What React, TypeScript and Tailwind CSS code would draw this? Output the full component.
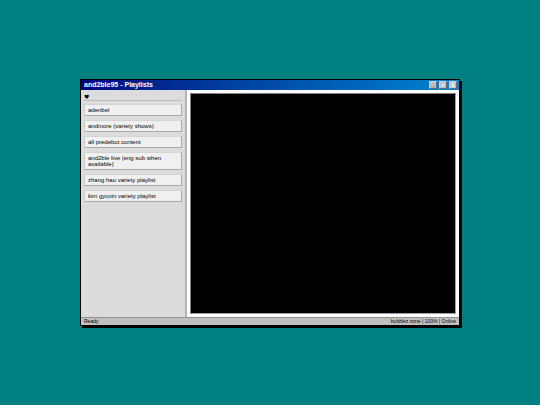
import { useState } from "react";

const PLAYLISTS = [
  { id: 1, title: "adenbel" },
  { id: 2, title: "andmore (variety shows)" },
  { id: 3, title: "all predebut content" },
  { id: 4, title: "and2ble live (eng sub when available)" },
  { id: 5, title: "zhang hao variety playlist" },
  { id: 6, title: "kim gyuvin variety playlist" },
];

const WINDOW_BUTTONS = [
  { label: "Minimize", glyph: "M2 6h4", color: "#999999" },
  { label: "Maximize", glyph: "M3 3h2v2h-2z", color: "#e4e4e4" },
  { label: "Close", glyph: "M2.5 1.5l3 5M5.5 1.5l-3 5", color: "#ffffff" },
];

function TitleBar() {
  return (
    <header className="flex h-[10px] shrink-0 items-center justify-between bg-linear-to-r from-[#000080] to-[#1084d0] pr-[2px] pl-[3px]">
      <h1 className="text-[7px] leading-[10px] font-bold text-white">and2ble95 - Playlists</h1>
      <div className="flex gap-[2px]">
        {WINDOW_BUTTONS.map((b) => (
          <button
            key={b.label}
            aria-label={b.label}
            className="size-2 border border-t-[#c8d4e0] border-r-[#56708c] border-b-[#56708c] border-l-[#c8d4e0] bg-[#c0c0c0]"
          >
            <svg viewBox="1 1 6 6" className="block size-full" fill="none" stroke={b.color} strokeWidth="1">
              <path d={b.glyph} />
            </svg>
          </button>
        ))}
      </div>
    </header>
  );
}

export default function App() {
  const [selected, setSelected] = useState(0);

  return (
    <div className="flex min-h-screen items-center bg-[#008080] px-20 font-['Liberation_Sans',Arial,sans-serif] text-black">
      <div className="flex h-[61vh] w-full flex-col border border-black bg-[#c0c0c0] shadow-[2px_2px_0_#000000]">
        <TitleBar />

        <div className="flex min-h-0 flex-1">
          <nav className="w-[28%] shrink-0 overflow-hidden border-r-2 border-[#b4b4b4] bg-[#dcdcdc] px-[3px] pt-[3px]">
            <div className="mb-[3px] flex h-2 items-center border-b border-[#b8b8b8] font-['DejaVu_Sans',sans-serif] text-[6px] leading-[7px]">♥</div>
            <ul className="flex flex-col gap-1">
              {PLAYLISTS.map((p) => (
                <li key={p.id} className="flex">
                  <button
                    onClick={() => setSelected(p.id)}
                    aria-pressed={selected === p.id}
                    className="w-full border border-t-[#d4d4d4] border-r-[#a8a8a8] border-b-[#a8a8a8] border-l-[#cccccc] bg-[#f0f0f0] px-[3px] py-[2px] text-left text-[6px] leading-[6px]"
                  >
                    {p.title}
                  </button>
                </li>
              ))}
            </ul>
          </nav>

          {/* Player */}
          <main className="flex flex-1 bg-white p-[3px]">
            <div className="flex-1 border border-t-[#808080] border-r-[#a0a0a0] border-b-[#a0a0a0] border-l-[#808080] bg-black" />
          </main>
        </div>

        <footer className="flex h-2 shrink-0 items-center justify-between border-t border-[#909090] px-[3px] text-[5px] leading-[7px]">
          <span>Ready</span>
          <span>bubblez.zone | 100% | Online</span>
        </footer>
      </div>
    </div>
  );
}
